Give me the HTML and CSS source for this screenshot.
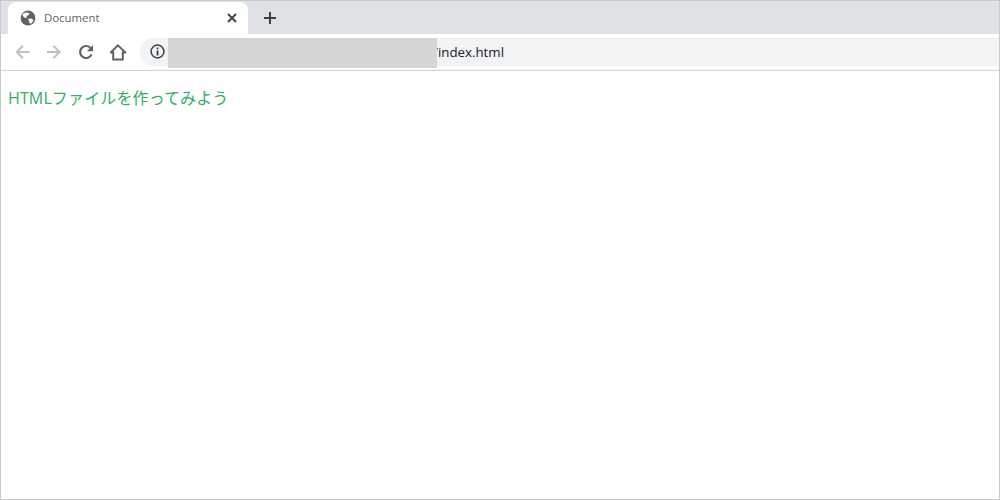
FILE: index.html
```html
<!DOCTYPE html>
<html lang="ja">
<head>
	<meta charset="UTF-8">
	<title>Document</title>
	<link rel="stylesheet" href="styles.css">
</head>
<body>
	<div class="window">
		<div class="tabstrip">
			<div class="tab">
				<svg class="globe" width="16" height="16" viewBox="0 0 16 16">
					<circle cx="8" cy="8" r="7.4" fill="#5f6368"/>
					<path d="M3 3.4 L6.6 2.4 L9.4 3.2 L8.6 5.2 L6.4 5.8 L7 7.8 L4.8 7.8 L2.4 5.6 Z" fill="#fff"/>
					<path d="M8 9 L11.8 8.6 L13.6 10.2 L11.4 13.2 L9.6 13.6 L9.2 11.2 Z" fill="#fff"/>
				</svg>
				<span class="tab-title">Document</span>
				<svg class="tab-close" width="10" height="10" viewBox="0 0 10 10">
					<path d="M1 1 L9 9 M9 1 L1 9" stroke="#3c4043" stroke-width="1.9" fill="none"/>
				</svg>
			</div>
			<svg class="new-tab" width="14" height="14" viewBox="0 0 14 14">
				<path d="M7 1 V13 M1 7 H13" stroke="#3c4043" stroke-width="2" fill="none"/>
			</svg>
		</div>
		<div class="toolbar">
			<svg class="tool" width="16" height="16" viewBox="0 0 16 16">
				<path d="M15.4 8 H3 M9 1.8 L2.8 8 L9 14.2" stroke="#bdc1c6" stroke-width="2" fill="none"/>
			</svg>
			<svg class="tool" width="16" height="16" viewBox="0 0 16 16">
				<path d="M1 8 H13.4 M7.4 1.8 L13.6 8 L7.4 14.2" stroke="#bdc1c6" stroke-width="2" fill="none"/>
			</svg>
			<svg class="tool" width="16" height="16" viewBox="0 0 16 16">
				<path d="M13.6 10.4 A6 6 0 1 1 12.4 3.8" stroke="#5f6368" stroke-width="2.2" fill="none"/>
				<path d="M15 1 V7.2 H8.8 Z" fill="#5f6368"/>
			</svg>
			<svg class="tool" width="16" height="17" viewBox="0 0 16 17">
				<path d="M8 1.4 L15.4 8.6 H12.8 V15.4 H3.2 V8.6 H0.6 Z" stroke="#5f6368" stroke-width="2" stroke-linejoin="miter" fill="none"/>
			</svg>
			<div class="omnibox">
				<svg class="info" width="15" height="15" viewBox="0 0 15 15">
					<circle cx="7.5" cy="7.5" r="6.4" stroke="#3c4043" stroke-width="1.5" fill="none"/>
					<path d="M7.5 6.4 V11.4 M7.5 3.4 V5.2" stroke="#3c4043" stroke-width="1.8" fill="none"/>
				</svg>
				<span class="url">/index.html</span>
				<div class="mask"></div>
			</div>
		</div>
		<div class="content">
			<p class="hello">HTMLファイルを作ってみよう</p>
		</div>
	</div>
</body>
</html>
```

FILE: styles.css
```css
*{
	margin:0;
	padding:0;
	box-sizing:border-box;
}
html,body{
	width:1000px;
	height:500px;
	overflow:hidden;
	background:#fff;
}
.window{
	width:1000px;
	height:500px;
	border:1px solid #c9c9c9;
	display:flex;
	flex-direction:column;
}
.tabstrip{
	height:33px;
	background:#dee1e6;
	display:flex;
	align-items:stretch;
	padding-left:7px;
	flex:none;
}
.tab{
	width:240px;
	margin-top:1px;
	background:#fff;
	border-radius:8px 8px 0 0;
	display:flex;
	align-items:center;
	padding:0 11px 0 12px;
}
.tab-title{
	margin-left:8px;
	font:11.4px "Open Sans","Liberation Sans",sans-serif;
	color:#5f6368;
	flex:1;
	margin-bottom:2px;
}
.new-tab{
	align-self:center;
	margin-left:15px;
}
.toolbar{
	height:37px;
	background:#fff;
	border-bottom:1px solid #d0d0d0;
	display:flex;
	align-items:flex-start;
	padding-left:13px;
	flex:none;
}
.tool{
	margin:10px 16px 0 0;
	flex:none;
}
.omnibox{
	position:relative;
	margin:4px 0 0 -2px;
	flex:1;
	height:28px;
	background:#f1f3f4;
	border-radius:14px 0 0 14px;
	display:flex;
	align-items:center;
	padding-left:10px;
}
.info{
	margin-top:-1px;
}
.url{
	margin-left:268px;
	font:13.3px "Open Sans","Liberation Sans",sans-serif;
	color:#202124;
}
.mask{
	position:absolute;
	left:28px;
	top:0;
	width:269px;
	height:30px;
	background:#d5d5d5;
}
.content{
	flex:1;
	background:#fff;
	padding:17px 7px;
}
.hello{
	font:16px/20px "Open Sans","Noto Sans CJK JP",sans-serif;
	letter-spacing:.13px;
	color:#35ad68;
}
```
